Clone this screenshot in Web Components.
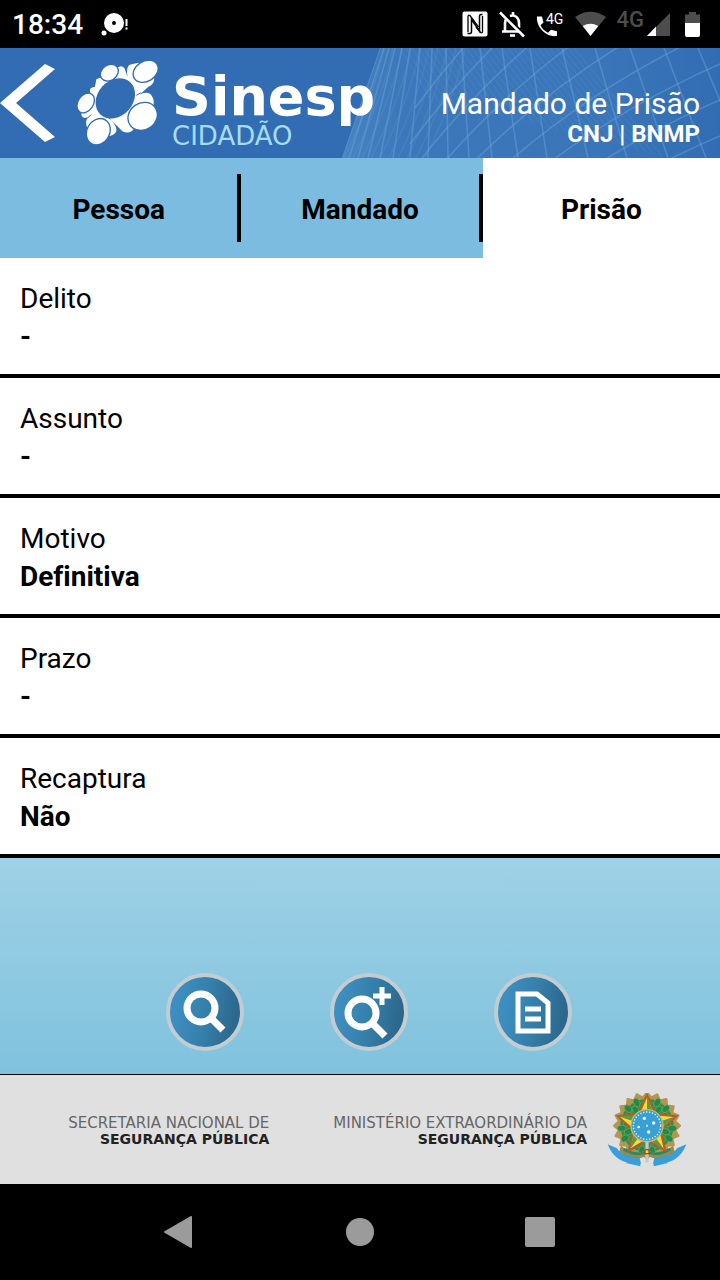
<!DOCTYPE html>
<html lang="pt-BR">
<head>
<meta charset="utf-8">
<meta name="viewport" content="width=device-width, initial-scale=1">
<title>Sinesp Cidadão - Mandado de Prisão</title>
<style>
    body {
        margin: 0;
        background: #000;
        color: #000;
        font-family: Roboto, sans-serif;
        font-variant-ligatures: none;
    }
</style>
</head>
<body>
<sinesp-app></sinesp-app>

<script>
const BUTTON_RESET = `
    button {
        margin: 0;
        padding: 0;
        border: 0;
        background: none;
        color: inherit;
        font: inherit;
        cursor: pointer;
    }
    svg { display: block; }
`;

class StatusBar extends HTMLElement {
    constructor() {
        super();
        this.attachShadow({ mode: 'open' });
        this.shadowRoot.innerHTML = `
            <style>
                :host {
                    display: flex;
                    align-items: center;
                    gap: 18px;
                    height: 48px;
                    padding: 0 20px 0 12px;
                    background: #000;
                    color: #fff;
                    font-size: 28px;
                    font-weight: 500;
                }
                svg { display: block; }
                .icons {
                    display: flex;
                    align-items: center;
                    gap: 11px;
                    margin-left: auto;
                }
                .mobile {
                    display: flex;
                    align-items: center;
                    gap: 3px;
                    color: #4d4d4d;
                    font-size: 22px;
                    line-height: 20px;
                }
                .mobile span { padding-bottom: 8px; }
            </style>
            <span>${this.getAttribute('time')}</span>
            <svg width="28" height="24" viewBox="0 0 28 24" fill="#fff">
                <circle cx="13" cy="11" r="10"/><circle cx="13" cy="11" r="2" fill="#000"/>
                <circle cx="3" cy="21" r="2.5"/><path d="M24.5 7h2v7h-2zM24.5 15.500h2v2h-2z"/>
            </svg>
            <div class="icons">
                <svg width="26" height="26" viewBox="0 0 26 26">
                    <rect x="0.500" y="0.500" width="25" height="25" rx="2" fill="#fff"/>
                    <path d="M9.500 20.500V8.500l8 11.500V5.500M5.500 22.500h2.500q1.500 0 1.500-2M17.500 5.500q0-2 1.500-2h1.500" fill="none" stroke="#000" stroke-width="1.500"/>
                    <path d="M6 21V5.500q0-2 2-1L16.500 16M20.500 5v15.500q0 2-2 1L14 16" fill="none" stroke="#000" stroke-width="1.300"/>
                </svg>
                <svg width="26" height="28" viewBox="0 0 26 28" fill="none" stroke="#fff" stroke-width="2.600">
                    <path d="M6 21V13c0-2 .5-3 1.500-4.500M11 6c5-2 9 2 9 7v5M3 21.500h17M14 5V2"/>
                    <path d="M11 25.500h5"/>
                    <path d="M3.500 1.500L26 25" stroke="#000" stroke-width="2"/>
                    <path d="M1 2.500L25 26.500"/>
                </svg>
                <svg width="28" height="28" viewBox="0 0 28 28" fill="#fff">
                    <path d="M1 6.500h5l1.500 6-3 2.800c1.800 3.600 4 5.800 7.500 7.500l3-3 6 1.500V26C10 27.500 0 17 1 6.500z"/>
                    <text x="10" y="14" font-size="14" font-weight="400" font-family="Roboto">4G</text>
                </svg>
                <svg width="31" height="26" viewBox="0 0 31 26">
                    <path d="M0 6Q15.500-4.500 31 6L15.500 25z" fill="#4d4d4d"/>
                    <path d="M7.700 15Q15.500 10.500 23.300 15L15.500 25z" fill="#fff"/>
                </svg>
                <div class="mobile">
                    <span>4G</span>
                    <svg width="23" height="24" viewBox="0 0 23 24">
                        <path d="M23 1v23H0z" fill="#4d4d4d"/><path d="M9 14.500V24H0z" fill="#fff"/>
                    </svg>
                </div>
                <svg width="19" height="26" viewBox="0 0 19 26">
                    <path d="M4 12V3.500h4V1h7v2.500h4V12z" fill="#4d4d4d"/>
                    <path d="M4 12h15v12q0 2-2 2H6q-2 0-2-2z" fill="#fff"/>
                </svg>
            </div>
        `;
    }
}

// Header with the back arrow, the Sinesp brand and the screen title
class AppHeader extends HTMLElement {
    constructor() {
        super();
        this.attachShadow({ mode: 'open' });
        this.shadowRoot.innerHTML = `
            <style>
                ${BUTTON_RESET}
                :host {
                    display: grid;
                    min-height: 110px;
                    background: #326db3;
                    color: #fff;
                    overflow: hidden;
                }
                .lattice, .bar { grid-area: 1 / 1; }
                .lattice {
                    justify-self: end;
                    width: 380px;
                    height: 110px;
                }
                .bar {
                    display: flex;
                    align-items: flex-end;
                }
                .back, .symbol { align-self: center; }
                .symbol { margin: 0 13px 0 20px; }
                .brand {
                    display: flex;
                    flex-direction: column;
                    padding-bottom: 8px;
                    font-family: "DejaVu Sans", sans-serif;
                }
                .brand b {
                    font-size: 54px;
                    line-height: 50px;
                }
                .brand span {
                    color: #a5dcf3;
                    font-size: 26px;
                    line-height: 28px;
                }
                .title {
                    margin-left: auto;
                    padding: 0 20px 11px 0;
                    text-align: right;
                }
                h1, p { margin: 0; }
                h1 {
                    font-size: 30px;
                    font-weight: 400;
                    line-height: 34px;
                }
                p {
                    font-size: 24px;
                    font-weight: 700;
                    line-height: 26px;
                }
            </style>
            <svg class="lattice" viewBox="0 0 380 110" aria-hidden="true">${this.lattice()}</svg>
            <div class="bar">
                <button class="back" aria-label="Voltar">
                    <svg width="56" height="78" viewBox="0 0 56 78"><path d="M45 0l10 5-39 34 39 34-10 5L0 39z" fill="#fff"/></svg>
                </button>
                <svg class="symbol" width="83" height="86" viewBox="45 28 249 258" fill="#fff">
                    <path d="M102 108L106 86 125 78 165 54Q180 40 190 52L200 80Q194 50 206 42L232 36 280 84Q278 102 262 108L236 132Q254 122 268 130 280 142 278 162L214 240Q200 250 184 242L148 206Q168 226 166 242 160 256 140 256L78 230Q72 214 80 200L70 202Q58 198 62 184L88 126Q82 110 102 108z"/>
                    <ellipse cx="163" cy="143" rx="66" ry="53" transform="rotate(-48 163 143)" fill="#326db3"/>
                    <g stroke="#326db3" stroke-width="4">
                        <ellipse cx="145" cy="66" rx="29" ry="23" transform="rotate(-35 145 66)"/>
                        <ellipse cx="254" cy="62" rx="40" ry="30" transform="rotate(-32 254 62)"/>
                        <ellipse cx="74" cy="157" rx="23" ry="32" transform="rotate(35 74 157)"/>
                        <ellipse cx="112" cy="243" rx="34" ry="41" transform="rotate(30 112 243)"/>
                        <ellipse cx="245" cy="197" rx="46" ry="40" transform="rotate(-35 245 197)"/>
                    </g>
                    <path d="M226 134l14-8M148 206l-5-5M90 192l-12 12" fill="none" stroke="#326db3" stroke-width="3"/>
                </svg>
                <div class="brand"><b>Sinesp</b><span>CIDADÃO</span></div>
                <div class="title">
                    <h1><slot></slot></h1>
                    <p><slot name="subtitle"></slot></p>
                </div>
            </div>
        `;
    }

    // Glass facade: a fan of uprights crossed by bands that flatten to the right
    lattice() {
        const uprights = [
            [40, 2], [44, 9], [49, 18], [55, 28], [62, 40], [70, 53], [80, 70], [92, 88], [106, 108],
            [122, 129], [140, 152], [162, 178], [190, 207], [222, 248], [255, 287], [290, 328], [324, 366], [358, 404]
        ];
        let lines = uprights.map(([top, bottom]) => `<path d="M${top} 0L${bottom} 110"/>`).join('');
        for (let i = 0; i < 15; i++) {
            const y = -200 + i * 36;
            lines += `<path d="M380 ${y}Q${200 - i * 4} ${y + 90} ${75 - i * 5} ${y + 260}"/>`;
        }
        for (let i = 0; i < 10; i++) {
            lines += `<path d="M${44 + i * 9} 0Q${34 + i * 9} 50 ${4 + i * 9} 110" opacity=".4"/>`;
        }
        for (let i = 0; i < 30; i++) {
            const x = 60 + i * 6;
            lines += `<path d="M${x} 0L${x + 30 + i * 2} ${50 + i * 2}" opacity=".3"/>`;
        }
        return `
            <defs>
                <linearGradient id="shade">
                    <stop offset="0" stop-color="#69a6da" stop-opacity=".4"/>
                    <stop offset=".15" stop-color="#69a6da" stop-opacity=".18"/>
                    <stop offset=".7" stop-color="#69a6da" stop-opacity=".14"/>
                    <stop offset="1" stop-color="#69a6da" stop-opacity="0"/>
                </linearGradient>
                <clipPath id="facade"><path d="M40 0H380V110H2z"/></clipPath>
            </defs>
            <path d="M40 0H380V110H2z" fill="url(#shade)"/>
            <g clip-path="url(#facade)" fill="none" stroke="#70a9dc" stroke-opacity=".42" stroke-width="1.600">${lines}</g>
        `;
    }
}

class TabBar extends HTMLElement {
    constructor() {
        super();
        this.attachShadow({ mode: 'open' });
        this.shadowRoot.innerHTML = `
            <style>
                ${BUTTON_RESET}
                :host {
                    display: flex;
                    height: 100px;
                    background: #7bbce0;
                    font-size: 28px;
                    font-weight: 700;
                }
                button {
                    flex: 1 1 0;
                    padding-top: 2px;
                }
                button[aria-selected="true"] { background: #fff; }
                i {
                    width: 4px;
                    margin: 16px 0;
                    background: #000;
                }
            </style>
        `;
        const names = this.getAttribute('tabs').split(',');
        this.shadowRoot.innerHTML += names.map(name => `
            <button role="tab" aria-selected="${name === this.getAttribute('selected')}">${name}</button>
        `).join('<i></i>');
        this.setAttribute('role', 'tablist');
        this.shadowRoot.addEventListener('click', (e) => this.select(e.target.closest('button')));
    }

    select(tab) {
        if (!tab) return;
        this.shadowRoot.querySelectorAll('button').forEach((button) => {
            button.setAttribute('aria-selected', button === tab);
        });
    }
}

class DetailRow extends HTMLElement {
    constructor() {
        super();
        this.attachShadow({ mode: 'open' });
        this.shadowRoot.innerHTML = `
            <style>
                :host {
                    display: block;
                    padding: 22px 20px 18px;
                    border-bottom: 4px solid #000;
                    background: #fff;
                    font-size: 28px;
                    line-height: 38px;
                }
                dl, dd { margin: 0; }
                dd { font-weight: 700; }
            </style>
            <dl><dt>${this.getAttribute('label')}</dt><dd><slot></slot></dd></dl>
        `;
    }
}

const ACTION_ICONS = {
    search: '<circle cx="35" cy="35" r="14"/><path d="M45 45l12 12"/>',
    more: '<circle cx="32" cy="40" r="14"/><path d="M42 50l13 13"/><path d="M43 23h18M52 14v18" stroke-width="5"/>',
    report: '<path d="M24 21h19l11 9v28H24z" stroke-width="5"/><path d="M31 36h16M31 46h16" stroke-width="5"/>'
};

class ActionButton extends HTMLElement {
    constructor() {
        super();
        this.attachShadow({ mode: 'open' });
        this.shadowRoot.innerHTML = `
            <style>
                ${BUTTON_RESET}
                :host { display: block; }
                button {
                    box-sizing: border-box;
                    width: 78px;
                    height: 78px;
                    border: 4px solid #c3ccd1;
                    border-radius: 50%;
                    background: linear-gradient(100deg, #3e8fc1 10%, #3580ab 50%, #2c678c 90%);
                }
                svg { margin: -4px; }
            </style>
            <button aria-label="${this.getAttribute('label')}">
                <svg width="78" height="78" viewBox="0 0 78 78" fill="none" stroke="#fff" stroke-width="7">${ACTION_ICONS[this.getAttribute('icon')]}</svg>
            </button>
        `;
    }
}

class CoatOfArms extends HTMLElement {
    constructor() {
        super();
        this.attachShadow({ mode: 'open' });
        const star = (outer, inner) => this.burst(5, outer, inner);
        this.shadowRoot.innerHTML = `
            <style>
                :host { display: block; }
                svg { display: block; }
            </style>
            <svg width="80" height="74" viewBox="-120 -98 240 222" role="img" aria-label="Brasão da República">
                <polygon points="${this.burst(20, 98, 84)}" fill="#b59550" stroke="#b59550" stroke-width="8" stroke-linejoin="round"/>
                <circle r="80" fill="#3a8a49"/>
                <g fill="#1f8a4b" stroke="#7fa552" stroke-width="2">${this.leaves()}</g>
                <path d="M-78 60Q-40 92 0 74 40 92 78 60L84 80Q40 110 0 90-40 110-84 80z" fill="#9b8a45"/>
                <path d="M-70 70Q-34 92 0 80 34 92 70 70" fill="none" stroke="#2d8b62" stroke-width="8"/>
                <polygon points="${star(92, 42)}" fill="#f5df35" stroke="#c2582a" stroke-width="6"/>
                <path d="${this.facets()}" fill="#5a9a45"/>
                <circle r="48" fill="#3aa0d4" stroke="#d0b866" stroke-width="4"/>
                <circle r="41" fill="none" stroke="#e3f1e5" stroke-width="4" stroke-dasharray="4 5"/>
                <g fill="#eefaff"><circle cx="-8" cy="-22" r="5"/><circle cx="20" cy="-8" r="5"/><circle cx="-25" cy="4" r="4"/><circle cx="5" cy="19" r="5"/><circle r="3"/></g>
                <path d="M-5 48H5V110H-5z" fill="#c2ccd0"/><path d="M-8 70H8V86H-8z" fill="#c23c23"/><path d="M-4 74H4V82H-4z" fill="#f5df35"/>
                <path d="M-118 56L-90 68Q-76 92-22 96L-18 114Q-94 120-118 56zM118 56L90 68Q76 92 22 96L18 114Q94 120 118 56zM-64 112L-20 106-20 122zM64 112L20 106 20 122z" fill="#3a9fd8"/>
            </svg>
        `;
    }

    burst(tips, outer, inner) {
        const points = [];
        for (let i = 0; i < tips * 2; i++) {
            const r = i % 2 ? inner : outer;
            const a = Math.PI * i / tips - Math.PI / 2;
            points.push(`${(r * Math.cos(a)).toFixed(1)},${(r * Math.sin(a)).toFixed(1)}`);
        }
        return points.join(' ');
    }

    facets() {
        const p = this.burst(5, 88, 38).split(' ');
        let d = '';
        for (let i = 0; i < 10; i += 2) {
            d += `M${p[i]}L${p[i + 1]}L0,0z`;
        }
        return d;
    }

    leaves() {
        let leaves = '';
        for (let i = 0; i < 30; i++) {
            const r = i % 2 ? 58 : 76;
            leaves += `<ellipse cx="${r}" rx="13" ry="9" transform="rotate(${i * 12 + 6})"/>`;
        }
        return leaves;
    }
}

class GovFooter extends HTMLElement {
    constructor() {
        super();
        this.attachShadow({ mode: 'open' });
        this.shadowRoot.innerHTML = `
            <style>
                :host {
                    display: flex;
                    justify-content: flex-end;
                    align-items: center;
                    box-sizing: border-box;
                    min-height: 110px;
                    padding-right: 33px;
                    border-top: 1px solid #000;
                    background: #e0e0e0;
                    color: #666;
                    font-family: "DejaVu Sans", sans-serif;
                    font-size: 15px;
                    line-height: 16px;
                    text-align: right;
                    white-space: nowrap;
                }
                p { margin: 2px 0 0; }
                p + p { margin-left: 64px; }
                b {
                    display: block;
                    color: #222;
                    font-size: 14px;
                }
                coat-of-arms { margin-left: 20px; }
            </style>
            <p>SECRETARIA NACIONAL DE <b>SEGURANÇA PÚBLICA</b></p>
            <p>MINISTÉRIO EXTRAORDINÁRIO DA <b>SEGURANÇA PÚBLICA</b></p>
            <coat-of-arms></coat-of-arms>
        `;
    }
}

class SystemNav extends HTMLElement {
    constructor() {
        super();
        this.attachShadow({ mode: 'open' });
        this.shadowRoot.innerHTML = `
            <style>
                ${BUTTON_RESET}
                :host {
                    display: flex;
                    height: 96px;
                    padding: 0 12.5%;
                    background: #000;
                }
                button {
                    display: grid;
                    place-items: center;
                    flex: 1;
                }
            </style>
            <button aria-label="Voltar"><svg width="32" height="32" viewBox="0 0 32 32"><path d="M27 1v30L1 16z" fill="#9b9b9b" stroke="#9b9b9b" stroke-width="2" stroke-linejoin="round"/></svg></button>
            <button aria-label="Início"><svg width="32" height="32" viewBox="0 0 32 32"><circle cx="16" cy="16" r="14" fill="#9b9b9b"/></svg></button>
            <button aria-label="Recentes"><svg width="32" height="32" viewBox="0 0 32 32"><rect x="1" y="1" width="30" height="30" rx="2" fill="#9b9b9b"/></svg></button>
        `;
    }
}

class SinespApp extends HTMLElement {
    constructor() {
        super();
        this.attachShadow({ mode: 'open' });
        this.shadowRoot.innerHTML = `
            <style>
                :host {
                    display: flex;
                    flex-direction: column;
                    min-height: 100vh;
                }
                .actions {
                    display: flex;
                    flex: 1;
                    align-items: flex-end;
                    justify-content: center;
                    gap: 86px;
                    padding: 24px 0 23px 17px;
                    background: linear-gradient(#9fd1e6, #80c2dd);
                }
            </style>
            <status-bar time="18:34"></status-bar>
            <app-header>Mandado de Prisão<span slot="subtitle">CNJ | BNMP</span></app-header>
            <tab-bar tabs="Pessoa,Mandado,Prisão" selected="Prisão"></tab-bar>
            <main>
                <detail-row label="Delito">-</detail-row>
                <detail-row label="Assunto">-</detail-row>
                <detail-row label="Motivo">Definitiva</detail-row>
                <detail-row label="Prazo">-</detail-row>
                <detail-row label="Recaptura">Não</detail-row>
            </main>
            <div class="actions">
                <action-button icon="search" label="Pesquisar"></action-button>
                <action-button icon="more" label="Pesquisa avançada"></action-button>
                <action-button icon="report" label="Relatório"></action-button>
            </div>
            <gov-footer></gov-footer>
            <system-nav></system-nav>
        `;
    }
}

customElements.define('status-bar', StatusBar);
customElements.define('app-header', AppHeader);
customElements.define('tab-bar', TabBar);
customElements.define('detail-row', DetailRow);
customElements.define('action-button', ActionButton);
customElements.define('coat-of-arms', CoatOfArms);
customElements.define('gov-footer', GovFooter);
customElements.define('system-nav', SystemNav);
customElements.define('sinesp-app', SinespApp);
</script>
</body>
</html>
